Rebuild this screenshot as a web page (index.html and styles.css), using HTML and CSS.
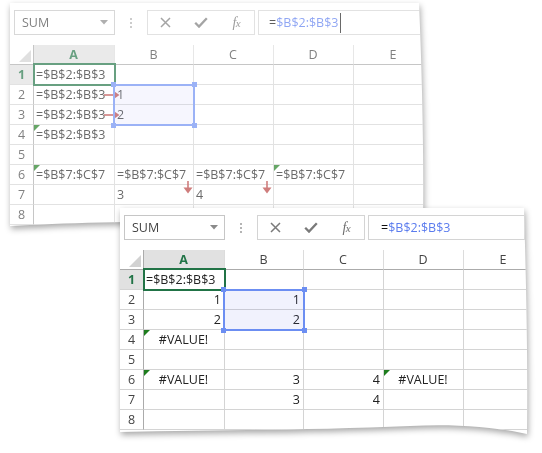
FILE: index.html
```html
<!DOCTYPE html>
<html>
<head>
<meta charset="utf-8">
<link rel="stylesheet" href="styles.css">
</head>
<body>
<div class="win win1">
  <div class="paper">
    <div class="fade">
      <div class="toolbar">
        <div class="namebox"><span>SUM</span><svg width="8" height="5" viewBox="0 0 8 5"><path d="M0 0H8L4 4.5Z" fill="#8a8a8a"/></svg></div>
        <div class="dots"><i></i><i></i><i></i></div>
        <div class="btns">
          <span class="btn"><svg width="11" height="11" viewBox="0 0 11 11"><path d="M1 1L10 10M10 1L1 10" stroke="#7a7a7a" stroke-width="1.5"/></svg></span>
          <span class="btn"><svg width="14" height="11" viewBox="0 0 14 11"><path d="M1.2 5.8L5 9.6L12.8 1.2" stroke="#7a7a7a" stroke-width="2.3" fill="none"/></svg></span>
          <span class="btn fx">f<small>x</small></span>
        </div>
        <div class="formula"><span>=</span><span class="ref">$B$2:$B$3</span><span class="caret"></span></div>
      </div>
      <div class="grid">
        <div class="c corner"></div><div class="c h selh">A</div><div class="c h">B</div><div class="c h">C</div><div class="c h">D</div><div class="c h">E</div>
        <div class="c rh selh">1</div><div class="c">=$B$2:$B$3</div><div class="c"></div><div class="c"></div><div class="c"></div><div class="c"></div>
        <div class="c rh">2</div><div class="c">=$B$2:$B$3<svg class="rarrow" width="16" height="10" viewBox="0 0 16 10"><path d="M0 5H10" stroke="#b8403f" stroke-width="1.6"/><path d="M9 0.5L15.5 5L9 9.5Z" fill="#b8403f"/></svg></div><div class="c">1</div><div class="c"></div><div class="c"></div><div class="c"></div>
        <div class="c rh">3</div><div class="c">=$B$2:$B$3<svg class="rarrow" width="16" height="10" viewBox="0 0 16 10"><path d="M0 5H10" stroke="#b8403f" stroke-width="1.6"/><path d="M9 0.5L15.5 5L9 9.5Z" fill="#b8403f"/></svg></div><div class="c">2</div><div class="c"></div><div class="c"></div><div class="c"></div>
        <div class="c rh">4</div><div class="c tri">=$B$2:$B$3</div><div class="c"></div><div class="c"></div><div class="c"></div><div class="c"></div>
        <div class="c rh">5</div><div class="c"></div><div class="c"></div><div class="c"></div><div class="c"></div><div class="c"></div>
        <div class="c rh">6</div><div class="c tri">=$B$7:$C$7</div><div class="c">=$B$7:$C$7<svg class="darrow" width="10" height="13" viewBox="0 0 10 13"><path d="M5 0V7" stroke="#b8403f" stroke-width="1.6"/><path d="M0.5 6.5H9.5L5 12.5Z" fill="#b8403f"/></svg></div><div class="c">=$B$7:$C$7<svg class="darrow" width="10" height="13" viewBox="0 0 10 13"><path d="M5 0V7" stroke="#b8403f" stroke-width="1.6"/><path d="M0.5 6.5H9.5L5 12.5Z" fill="#b8403f"/></svg></div><div class="c tri">=$B$7:$C$7</div><div class="c"></div>
        <div class="c rh">7</div><div class="c"></div><div class="c">3</div><div class="c">4</div><div class="c"></div><div class="c"></div>
        <div class="c rh">8</div><div class="c"></div><div class="c"></div><div class="c"></div><div class="c"></div><div class="c"></div>
        <div class="act"></div>
        <div class="sel"><i class="hd tl"></i><i class="hd tr"></i><i class="hd bl"></i><i class="hd br"></i></div>
      </div>
    </div>
  </div>
</div>

<div class="win win2">
  <div class="paper">
    <div class="toolbar">
      <div class="namebox"><span>SUM</span><svg width="8" height="5" viewBox="0 0 8 5"><path d="M0 0H8L4 4.5Z" fill="#8a8a8a"/></svg></div>
      <div class="dots"><i></i><i></i><i></i></div>
      <div class="btns">
        <span class="btn"><svg width="11" height="11" viewBox="0 0 11 11"><path d="M1 1L10 10M10 1L1 10" stroke="#7a7a7a" stroke-width="1.5"/></svg></span>
        <span class="btn"><svg width="14" height="11" viewBox="0 0 14 11"><path d="M1.2 5.8L5 9.6L12.8 1.2" stroke="#7a7a7a" stroke-width="2.3" fill="none"/></svg></span>
        <span class="btn fx">f<small>x</small></span>
      </div>
      <div class="formula f2"><span>=</span><span class="ref">$B$2:$B$3</span></div>
    </div>
    <div class="grid">
      <div class="c corner"></div><div class="c h selh">A</div><div class="c h">B</div><div class="c h">C</div><div class="c h">D</div><div class="c h">E</div>
      <div class="c rh selh">1</div><div class="c">=$B$2:$B$3</div><div class="c"></div><div class="c"></div><div class="c"></div><div class="c"></div>
      <div class="c rh">2</div><div class="c num">1</div><div class="c num">1</div><div class="c"></div><div class="c"></div><div class="c"></div>
      <div class="c rh">3</div><div class="c num">2</div><div class="c num">2</div><div class="c"></div><div class="c"></div><div class="c"></div>
      <div class="c rh">4</div><div class="c tri err">#VALUE!</div><div class="c"></div><div class="c"></div><div class="c"></div><div class="c"></div>
      <div class="c rh">5</div><div class="c"></div><div class="c"></div><div class="c"></div><div class="c"></div><div class="c"></div>
      <div class="c rh">6</div><div class="c tri err">#VALUE!</div><div class="c num">3</div><div class="c num">4</div><div class="c tri err">#VALUE!</div><div class="c"></div>
      <div class="c rh">7</div><div class="c"></div><div class="c num">3</div><div class="c num">4</div><div class="c"></div><div class="c"></div>
      <div class="c rh">8</div><div class="c"></div><div class="c"></div><div class="c"></div><div class="c"></div><div class="c"></div>
      <div class="act"></div>
      <div class="sel"><i class="hd tl"></i><i class="hd tr"></i><i class="hd bl"></i><i class="hd br"></i></div>
    </div>
  </div>
</div>
</body>
</html>
```
FILE: styles.css
```css
html, body {
  margin: 0;
  padding: 0;
  background: #ffffff;
}
body {
  width: 542px;
  height: 453px;
  position: relative;
  overflow: hidden;
  font-family: "Open Sans", "Noto Sans", sans-serif;
  font-size: 12.5px;
  color: #222;
}
.win {
  position: absolute;
  filter: drop-shadow(1px 3px 3px rgba(0, 0, 0, 0.35));
}
.win1 { left: 10px; top: 3px; }
.win2 { left: 120px; top: 208px; }
.paper {
  background: #ffffff;
  overflow: hidden;
}
.win1 .paper {
  width: 414px;
  height: 226px;
  clip-path: path("M0 0 H409 C412 70 414 150 413 224 C300 216 100 217 0 223 Z");
}
.win2 .paper {
  width: 408px;
  height: 228px;
  clip-path: path("M0 0 H404 C406 70 408 150 407 226 C370 218 330 216 290 218 C200 222 100 222 0 224 Z");
}
.fade { opacity: 0.68; }

.toolbar {
  display: flex;
  align-items: center;
  height: 25px;
  padding: 7px 0 0 4px;
  margin-bottom: 10px;
}
.namebox {
  width: 101px;
  height: 25px;
  box-sizing: border-box;
  border: 1px solid #c6c6c6;
  display: flex;
  align-items: center;
  justify-content: space-between;
  padding: 0 6px 0 7px;
  color: #444;
  font-size: 12.5px;
}
.dots {
  width: 32px;
  display: flex;
  flex-direction: column;
  align-items: center;
  gap: 2px;
}
.dots i {
  display: block;
  width: 2px;
  height: 2px;
  background: #b4b4b4;
}
.btns {
  width: 108px;
  height: 25px;
  box-sizing: border-box;
  border: 1px solid #d4d4d4;
  display: flex;
}
.btn {
  flex: 1;
  display: flex;
  align-items: center;
  justify-content: center;
}
.fx {
  font-family: "Liberation Serif", serif;
  font-style: italic;
  font-size: 14px;
  color: #6e6e6e;
  letter-spacing: -0.5px;
}
.fx small { font-size: 11px; }
.formula {
  flex: 1;
  height: 25px;
  margin-left: 3px;
  margin-right: 3px;
  box-sizing: border-box;
  border: 1px solid #d4d4d4;
  display: flex;
  align-items: center;
  padding-left: 10px;
  color: #111;
  white-space: nowrap;
}
.f2 { padding-left: 12px; }
.ref { color: #5b7cee; }
.caret {
  display: inline-block;
  width: 1px;
  height: 20px;
  background: #222;
  margin-left: 2px;
}

.grid {
  display: grid;
  grid-template-columns: 24px 81px 79px 80px 80px 80px;
  grid-auto-rows: 20px;
  position: relative;
}
.c {
  box-sizing: border-box;
  border-right: 1px solid #d4d4d4;
  border-bottom: 1px solid #d4d4d4;
  padding: 0 3px 0 2px;
  line-height: 19px;
  white-space: nowrap;
  position: relative;
  color: #222;
}
.h {
  text-align: center;
  color: #444;
  border-bottom-color: #ababab;
  border-right-color: #dcdcdc;
}
.rh {
  text-align: center;
  color: #444;
  padding: 0;
  border-right-color: #ababab;
}
.selh {
  background: #e1e1e1;
  color: #217346;
  font-weight: bold;
}
.corner {
  border-bottom-color: #ababab;
  border-right-color: #ababab;
}
.corner::after {
  content: "";
  position: absolute;
  right: 2px;
  bottom: 2px;
  border-left: 12px solid transparent;
  border-bottom: 12px solid #d2d2d2;
}
.num { text-align: right; }
.err { text-align: center; }
.tri::before {
  content: "";
  position: absolute;
  left: 0;
  top: 0;
  border-top: 6px solid #1e7d1e;
  border-right: 6px solid transparent;
}
.rarrow {
  position: absolute;
  left: 70px;
  top: 5px;
}
.darrow {
  position: absolute;
  left: 68px;
  top: 16px;
  z-index: 2;
}
.act {
  position: absolute;
  left: 23px;
  top: 18px;
  width: 83px;
  height: 23px;
  box-sizing: border-box;
  border: 2px solid #217346;
}
.sel {
  position: absolute;
  left: 103px;
  top: 39px;
  width: 82px;
  height: 42px;
  box-sizing: border-box;
  border: 2px solid #6c8ef2;
  background: rgba(100, 110, 235, 0.09);
}
.hd {
  position: absolute;
  width: 5px;
  height: 5px;
  background: #6c8ef2;
}
.tl { left: -4px; top: -4px; }
.tr { right: -4px; top: -4px; }
.bl { left: -4px; bottom: -4px; }
.br { right: -4px; bottom: -4px; }
```
